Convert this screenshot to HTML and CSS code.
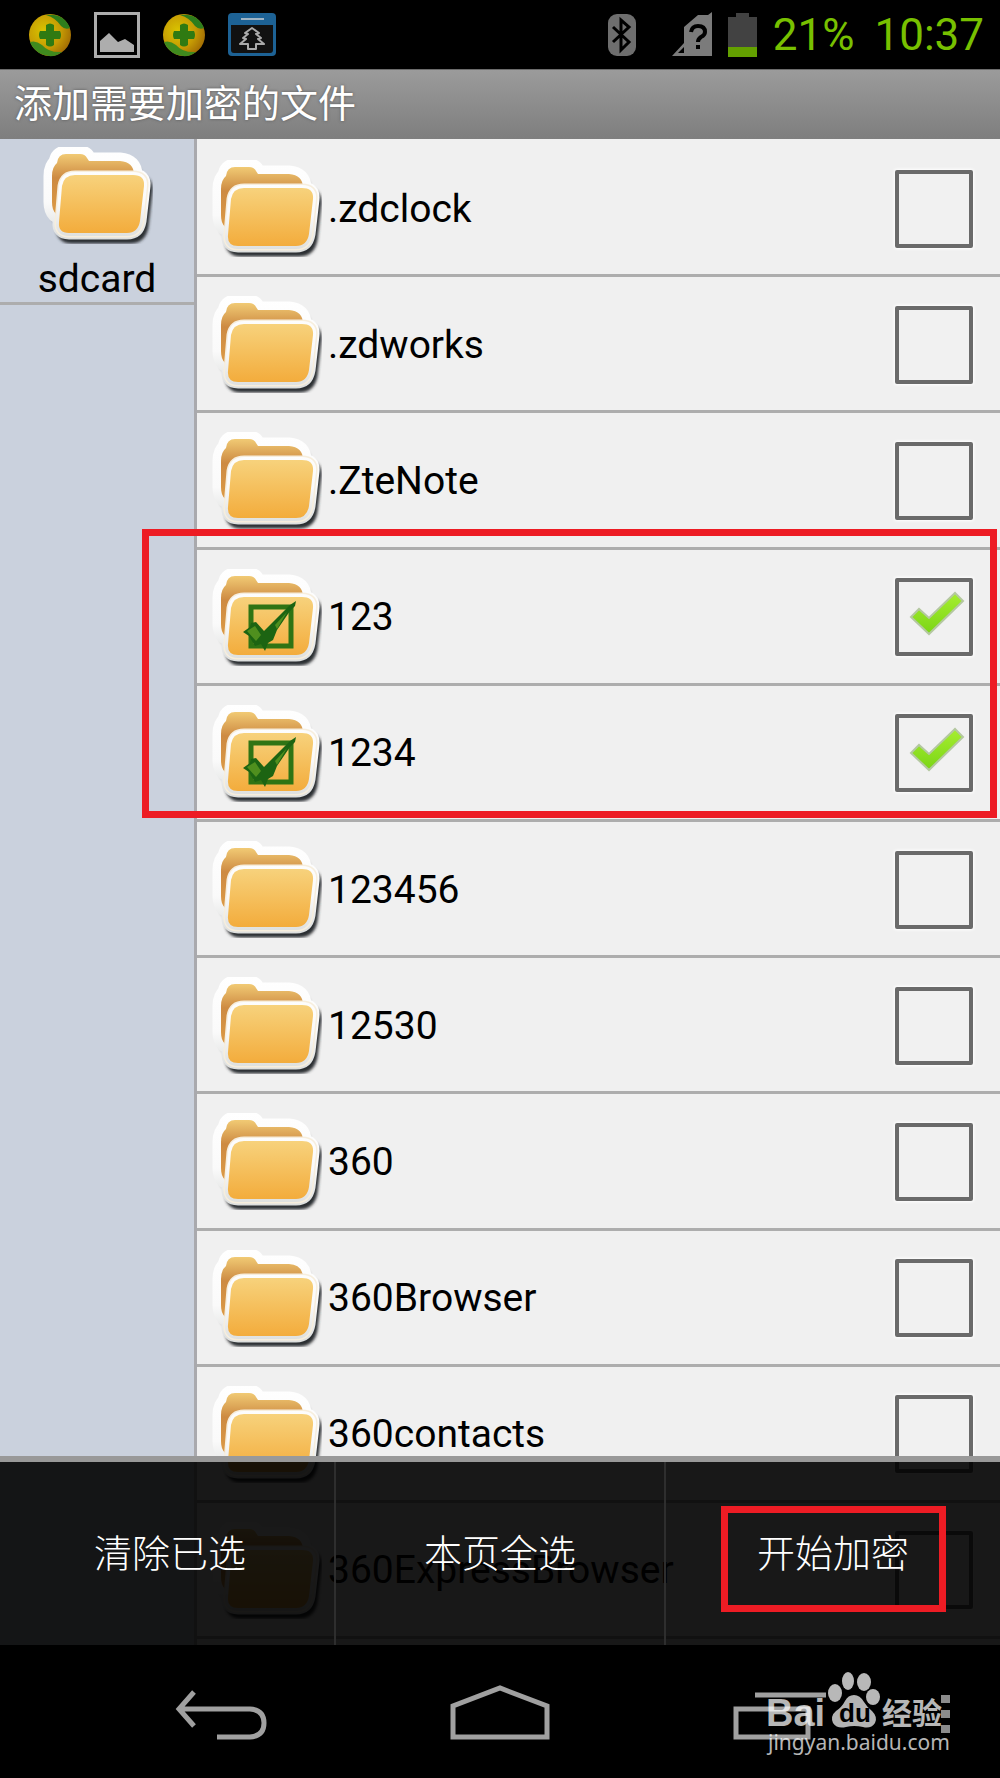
FILE: index.html
```
<!DOCTYPE html>
<html lang="zh-CN">
<head>
  <meta charset="UTF-8">
  <meta name="viewport" content="width=device-width, initial-scale=1">
  <title>添加需要加密的文件</title>
  <link rel="stylesheet" href="styles.css">
</head>
<body>

  <!-- shared icons -->
  <svg class="sprite" aria-hidden="true">
    <defs>
      <linearGradient id="front" x1="0" y1="0" x2="0" y2="1">
        <stop offset="0" stop-color="#f7d27c"/>
        <stop offset="1" stop-color="#f3ac3c"/>
      </linearGradient>
      <linearGradient id="back" x1="0" y1="0" x2="0" y2="1">
        <stop offset="0" stop-color="#f1ca74"/>
        <stop offset="0.4" stop-color="#cd8a42"/>
        <stop offset="1" stop-color="#dc9a45"/>
      </linearGradient>
      <linearGradient id="rim" gradientUnits="userSpaceOnUse" x1="0" y1="0" x2="0" y2="92">
        <stop offset="0" stop-color="#ffffff"/>
        <stop offset="0.6" stop-color="#fafafa"/>
        <stop offset="1" stop-color="#dcdedd"/>
      </linearGradient>
      <radialGradient id="ball" cx="0.35" cy="0.4" r="0.7">
        <stop offset="0" stop-color="#d9c400"/>
        <stop offset="0.6" stop-color="#c59a04"/>
        <stop offset="1" stop-color="#a06a04"/>
      </radialGradient>
      <filter id="soft" x="-20%" y="-20%" width="140%" height="140%">
        <feGaussianBlur stdDeviation="1.6"/>
      </filter>
      <path id="back-shape" d="M14 67 C11 64 10 60 10 55 V29 Q10 20 15 16 Q16 7 24 7 H38 Q43 7 45 11 L47 14 H78 Q92 15 92 28 V60 H22 Z"/>
      <path id="front-shape" d="M33 28 H91 Q103 28 102 39 L98 74 Q96 86 85 86 H27 Q16 86 17 75 L20 39 Q22 28 33 28 Z"/>
    </defs>

    <symbol id="folder" viewBox="0 0 111 97">
      <g transform="translate(3 5)" fill="#2b2d30" stroke="#2b2d30" stroke-width="11" stroke-linejoin="round" filter="url(#soft)">
        <use href="#back-shape" opacity="0.6"/>
        <use href="#front-shape"/>
      </g>
      <g fill="#fff" stroke="url(#rim)" stroke-linejoin="round">
        <use href="#back-shape" stroke-width="17"/>
        <use href="#front-shape" stroke-width="13"/>
      </g>
      <use href="#back-shape" fill="url(#back)"/>
      <use href="#front-shape" fill="none" stroke="#f7eedd" stroke-width="9"/>
      <use href="#front-shape" fill="none" stroke="url(#rim)" stroke-width="6"/>
      <use href="#front-shape" fill="url(#front)"/>
    </symbol>

    <symbol id="folder-checked" viewBox="0 0 111 97">
      <use href="#folder" width="111" height="97"/>
      <rect x="40" y="38" width="40" height="39" fill="none" stroke="#2f7414" stroke-width="5"/>
      <path d="M32 63 L39 58 L40 54 L45 53 L53 62 L79 36 L85 32 L84 37 L79 42 L66 61 L62 71 L57 74 L54 82 L50 75 L44 77 L38 67 Z" fill="#1c6412"/>
      <path d="M36 62 L44 57 L50 66 L45 72 Z M64 56 L76 43 L66 60 Z" fill="#4f8f1e"/>
    </symbol>

    <symbol id="shield" viewBox="0 0 44 44">
      <circle cx="22" cy="22" r="21" fill="url(#ball)"/>
      <path d="M18 2 Q36 0 42 15 Q37 17 33 13 Q28 5 18 2 Z" fill="#2e7d1c"/>
      <path d="M2 29 Q8 27 14 32 Q21 40 34 39 Q24 47 11 40 Q4 35 2 29 Z" fill="#3f8a1e"/>
      <path d="M18 12 Q22 9 26 12 V18 H32 Q34 22 32 26 H26 V32 Q22 35 18 32 V26 H12 Q10 22 12 18 H18 Z" fill="#2f7a12"/>
    </symbol>
  </svg>

  <div class="phone">

    <div class="status-bar">
      <svg width="44" height="44"><use href="#shield"/></svg>
      <svg width="46" height="46" viewBox="0 0 46 46">
        <rect x="1.5" y="1.5" width="43" height="43" fill="none" stroke="#adadad" stroke-width="3"/>
        <path d="M6 40 V29 L15 21 L24 30 L31 27 L40 33 V40 Z" fill="#adadad"/>
      </svg>
      <svg width="44" height="44"><use href="#shield"/></svg>
      <svg width="48" height="44" viewBox="0 0 48 44">
        <rect width="48" height="43" rx="4" fill="#1d6295"/>
        <path d="M13 6 H36" stroke="#9fb4c4" stroke-width="2"/>
        <path d="M3 12 H45 V37 Q45 40 42 40 H6 Q3 40 3 37 Z" fill="#111"/>
        <path d="M24 15 L31 20 L28 21 L33 25 L30 26 L36 31 H28 V36 H20 V31 H12 L18 26 L15 25 L20 21 L17 20 Z" fill="none" stroke="#aaa" stroke-width="2" stroke-linejoin="round"/>
      </svg>

      <div class="status-right">
        <svg class="bluetooth" width="28" height="42" viewBox="0 0 28 42">
          <rect width="28" height="42" rx="9" fill="#6e6e6e"/>
          <path d="M5 13 L21 28 L13 36 V6 L21 13 L5 28" fill="none" stroke="#000" stroke-width="3"/>
        </svg>
        <svg width="40" height="45" viewBox="0 0 40 45">
          <path d="M0 44 L12 31 V15 L26 3 H36 L40 0 V44 Z" fill="#7b7b7b"/>
          <path d="M6 41 L12 35 V41 Z" fill="#000"/>
          <path d="M19 20 Q20 14 26 14 Q33 14 33 20 Q33 23 29 25 Q26 27 26 30" fill="none" stroke="#000" stroke-width="4"/>
          <rect x="24" y="33" width="4" height="4" fill="#000"/>
        </svg>
        <svg width="29" height="44" viewBox="0 0 29 44">
          <path d="M0 4 H8 V0 H21 V4 H29 V35 H0 Z" fill="#424242"/>
          <rect y="34" width="29" height="10" fill="#63a000"/>
        </svg>
        <span>21%</span>
        <span>10:37</span>
      </div>
    </div>

    <h1 class="title-bar">添加需要加密的文件</h1>

    <div class="content">
      <div class="sidebar">
        <button class="root">
          <svg class="folder"><use href="#folder"/></svg>
          sdcard
        </button>
      </div>

      <div class="file-list">
        <label class="file">
          <svg class="folder"><use href="#folder"/></svg>
          <span class="name">.zdclock</span>
          <input type="checkbox">
        </label>
        <label class="file">
          <svg class="folder"><use href="#folder"/></svg>
          <span class="name">.zdworks</span>
          <input type="checkbox">
        </label>
        <label class="file">
          <svg class="folder"><use href="#folder"/></svg>
          <span class="name">.ZteNote</span>
          <input type="checkbox">
        </label>
        <label class="file">
          <svg class="folder"><use href="#folder-checked"/></svg>
          <span class="name">123</span>
          <input type="checkbox" checked>
        </label>
        <label class="file">
          <svg class="folder"><use href="#folder-checked"/></svg>
          <span class="name">1234</span>
          <input type="checkbox" checked>
        </label>
        <label class="file">
          <svg class="folder"><use href="#folder"/></svg>
          <span class="name">123456</span>
          <input type="checkbox">
        </label>
        <label class="file">
          <svg class="folder"><use href="#folder"/></svg>
          <span class="name">12530</span>
          <input type="checkbox">
        </label>
        <label class="file">
          <svg class="folder"><use href="#folder"/></svg>
          <span class="name">360</span>
          <input type="checkbox">
        </label>
        <label class="file">
          <svg class="folder"><use href="#folder"/></svg>
          <span class="name">360Browser</span>
          <input type="checkbox">
        </label>
        <label class="file">
          <svg class="folder"><use href="#folder"/></svg>
          <span class="name">360contacts</span>
          <input type="checkbox">
        </label>
        <label class="file">
          <svg class="folder"><use href="#folder"/></svg>
          <span class="name">360ExpressBrowser</span>
          <input type="checkbox">
        </label>
      </div>

      <div class="mark mark-files"></div>

      <div class="menu">
        <button>清除已选</button>
        <button>本页全选</button>
        <button>开始加密<span class="mark mark-start"></span></button>
      </div>
    </div>

    <div class="nav">
      <button aria-label="返回">
        <svg width="92" height="56" viewBox="0 0 92 56">
          <path d="M19 8 L4 25 L19 42 M4 25 H75 Q89 26 89 39 Q89 52 75 53 H42" fill="none" stroke="#a0a0a0" stroke-width="5"/>
        </svg>
      </button>
      <button aria-label="主屏幕">
        <svg width="100" height="56" viewBox="0 0 100 56">
          <path d="M3 53 V22 L50 4 L97 22 V53 Z" fill="none" stroke="#a0a0a0" stroke-width="5"/>
        </svg>
      </button>
      <button aria-label="最近任务">
        <svg width="96" height="56" viewBox="0 0 96 56">
          <path d="M5 25 H77 V53 H5 Z M24 11 H95" fill="none" stroke="#a0a0a0" stroke-width="5"/>
        </svg>
      </button>

      <svg class="watermark" width="195" height="100" viewBox="0 0 195 100">
        <g fill="#fff" fill-opacity="0.72">
          <text class="wm-latin" x="6" y="61">Bai</text>
          <ellipse cx="75" cy="28" rx="7" ry="9"/>
          <ellipse cx="88" cy="16" rx="6" ry="9"/>
          <ellipse cx="104" cy="17" rx="7" ry="9"/>
          <ellipse cx="113" cy="32" rx="7" ry="8"/>
        </g>
        <path d="M94 30 Q100 30 104 37 Q107 42 112 46 Q118 52 115 58 Q111 64 103 62 Q94 60 86 62 Q77 64 73 58 Q70 51 76 46 Q82 42 85 36 Q88 30 94 30 Z" fill="#b4b4b4"/>
        <text class="wm-du" x="79" y="57">du</text>
        <g fill="#fff" fill-opacity="0.72">
          <text class="wm-cn" x="122" y="59">经验</text>
          <path d="M181 30 h9 v8 h-9 Z M181 45 h9 v8 h-9 Z M181 60 h9 v8 h-9 Z" fill-opacity="0.55"/>
          <text class="wm-url" x="8" y="85">jingyan.baidu.com</text>
        </g>
      </svg>
    </div>

  </div>

</body>
</html>
```

FILE: styles.css
```
* { box-sizing: border-box; }

body {
  margin: 0;
  font-family: Roboto, 'Noto Sans CJK SC', sans-serif;
  font-size: 39px;
  color: #000;
  background: #000;
}

button {
  padding: 0;
  border: none;
  background: none;
  font: inherit;
  color: inherit;
  cursor: pointer;
}

.sprite {
  position: absolute;
  width: 0;
  height: 0;
}

.phone {
  display: flex;
  flex-direction: column;
  min-height: 100vh;
}

/* status bar */
.status-bar {
  display: flex;
  align-items: center;
  gap: 22px;
  height: 69px;
  padding: 0 16px 0 28px;
  background: #000;
}

.status-right {
  display: flex;
  align-items: center;
  gap: 16px;
  margin-left: auto;
  font-size: 44px;
  line-height: 48px;
  color: #78c000;
}

.status-right span + span {
  margin-left: 4px;
}

.bluetooth {
  margin-right: 20px;
}

.title-bar {
  margin: 0;
  padding: 0 14px;
  height: 70px;
  border-top: 1px solid #6c6c6c;
  background: linear-gradient(#9b9b9b, #7e7e7e);
  font-size: 38px;
  font-weight: 400;
  line-height: 68px;
  color: #fff;
  text-shadow: 0 0 3px #555;
}

/* folders */
.content {
  position: relative;
  display: flex;
  flex: 1;
  background: #f0f0f0;
}

.sidebar {
  width: 197px;
  border-right: 3px solid #a9a9ad;
  background: #cad1dd;
}

.root {
  display: flex;
  flex-direction: column;
  align-items: center;
  width: 100%;
  padding-top: 8px;
  border-bottom: 3px solid #adadad;
  line-height: 46px;
}

.root .folder {
  margin-bottom: 12px;
}

.folder {
  display: block;
  flex: none;
  width: 111px;
  height: 97px;
}

.file-list {
  display: flex;
  flex: 1;
  flex-direction: column;
  padding: 2px 0 6px;
}

.file {
  display: flex;
  flex: 1;
  align-items: center;
  gap: 6px;
  padding: 2px 27px 0 14px;
  border-bottom: 3px solid #adadad;
  cursor: pointer;
}

.name {
  flex: 1;
}

.file input {
  appearance: none;
  width: 78px;
  height: 78px;
  margin: 0;
  border: 4px solid #6a6a6a;
  border-radius: 2px;
  background: #f1f1f1;
  box-shadow: 0 0 3px 1px #fff;
  cursor: pointer;
}

.file input:checked {
  background-image: url("data:image/svg+xml,%3Csvg xmlns='http://www.w3.org/2000/svg' viewBox='0 0 70 70'%3E%3ClinearGradient id='g' x2='0' y2='1'%3E%3Cstop stop-color='%23a6ee30'/%3E%3Cstop offset='1' stop-color='%237bd516'/%3E%3C/linearGradient%3E%3Cpath d='M12 35 L20 27 L30 36 L56 11 L64 19 L30 52 Z' fill='url(%23g)' stroke='%23b4c8a0' stroke-width='2'/%3E%3C/svg%3E");
}

/* bottom menu, lies over the list */
.menu {
  position: absolute;
  left: 0;
  right: 0;
  bottom: 0;
  display: grid;
  grid-template-columns: 334fr 330fr 336fr;
  height: 189px;
  border-top: 6px solid #999;
  background: rgba(0, 0, 0, 0.9);
  background-clip: padding-box;
}

.menu button {
  position: relative;
  padding: 0 0 6px 6px;
  font-size: 38px;
  font-weight: 300;
  color: #fff;
}

.menu button + button {
  padding-left: 0;
  border-left: 2px solid #2e2e2e;
}

.mark {
  position: absolute;
  border: 7px solid #ed1c24;
  pointer-events: none;
}

.mark-files {
  top: 390px;
  left: 142px;
  right: 3px;
  height: 289px;
}

.mark-start {
  top: 44px;
  left: 55px;
  right: 54px;
  height: 106px;
}

/* navigation keys */
.nav {
  position: relative;
  display: grid;
  grid-template-columns: repeat(3, 1fr);
  height: 133px;
  padding: 0 82px;
  background: #000;
}

.nav button {
  display: flex;
  align-items: center;
  justify-content: center;
}

.watermark {
  position: absolute;
  right: 45px;
  bottom: 13px;
  pointer-events: none;
}

.wm-latin {
  font: bold 38px 'Liberation Sans', sans-serif;
}

.wm-du {
  font: bold 26px 'Liberation Sans', sans-serif;
  fill: #000;
}

.wm-cn {
  font: bold 30px 'Noto Sans CJK SC', sans-serif;
}

.wm-url {
  font: 21px 'Noto Sans', sans-serif;
}
```
